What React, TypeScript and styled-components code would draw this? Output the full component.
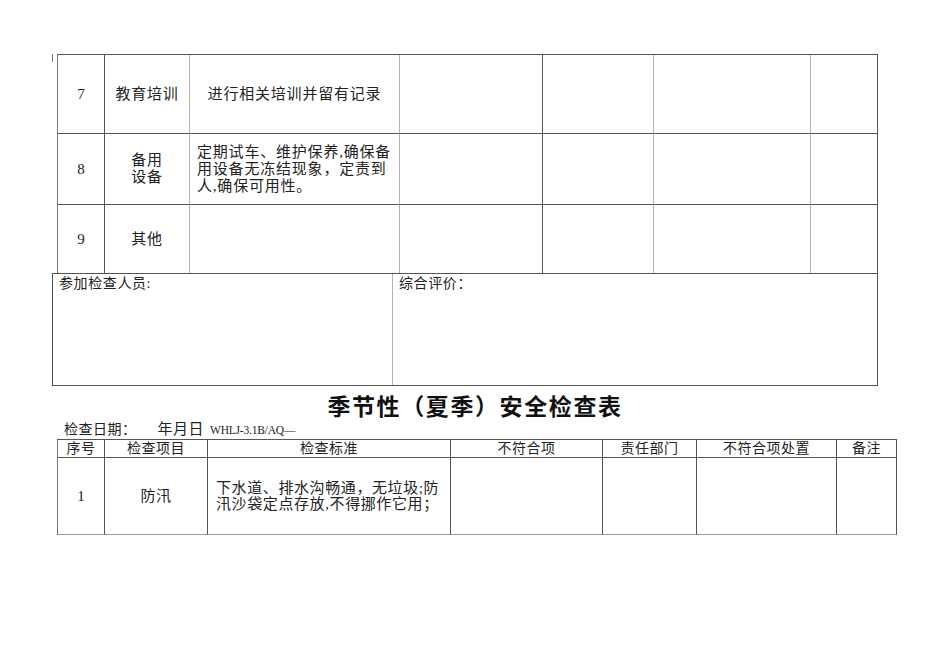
import React from "react";
import styled, { createGlobalStyle } from "styled-components";

const GlobalStyle = createGlobalStyle`
  html, body {
    margin: 0;
    padding: 0;
    background: #ffffff;
  }
  body {
    font-family: "Liberation Serif", "Noto Sans CJK SC", serif;
    color: #222222;
  }
`;

const DARK = "#555555";
const LIGHT = "#b4b4b4";

const Page = styled.div`
  width: 950px;
  height: 672px;
  padding-top: 54px;
  box-sizing: border-box;
  overflow: hidden;
`;

const TopRow = styled.div`
  display: flex;
  align-items: flex-start;
  padding-left: 52px;
`;

const Tick = styled.div`
  width: 1px;
  height: 8px;
  background: #777777;
  margin-right: 4px;
`;

const Grid = styled.div<{ $cols: string; $rows: string }>`
  display: grid;
  width: max-content;
  grid-template-columns: ${(p) => p.$cols};
  grid-template-rows: ${(p) => p.$rows};
  border-top: 1px solid ${DARK};
  border-left: 1px solid #777777;
  box-sizing: content-box;
`;

const Cell = styled.div<{
  $light?: boolean;
  $noBottom?: boolean;
  $align?: "center" | "left";
  $bottomLight?: boolean;
}>`
  box-sizing: border-box;
  border-right: 1px solid ${(p) => (p.$light ? LIGHT : DARK)};
  border-bottom: ${(p) =>
    p.$noBottom ? "none" : `1px solid ${p.$bottomLight ? "#9a9a9a" : DARK}`};
  display: flex;
  align-items: center;
  justify-content: ${(p) => (p.$align === "left" ? "flex-start" : "center")};
  text-align: ${(p) => (p.$align === "left" ? "left" : "center")};
  padding: ${(p) => (p.$align === "left" ? "0 0 0 7px" : "0")};
  font-size: 15px;
  line-height: 17px;
  letter-spacing: 0.8px;
  white-space: nowrap;
  overflow: hidden;
`;

const Num = styled.span`
  font-family: "Liberation Serif", serif;
  font-size: 15px;
  letter-spacing: 0;
`;

const InfoBox = styled.div`
  margin-left: 52px;
  width: 826px;
  height: 113px;
  box-sizing: border-box;
  border: 1px solid ${DARK};
  display: grid;
  grid-template-columns: 340px 1fr;
`;

const InfoCell = styled.div<{ $divider?: boolean }>`
  border-right: ${(p) => (p.$divider ? `1px solid ${LIGHT}` : "none")};
  padding: 1px 6px;
  font-size: 14px;
  line-height: 18px;
  letter-spacing: 0.6px;
`;

const Title = styled.h1`
  margin: 4px 0 0 0;
  height: 30px;
  line-height: 30px;
  text-align: center;
  font-family: "Noto Sans CJK SC", sans-serif;
  font-weight: 700;
  font-size: 23px;
  letter-spacing: 1.6px;
  color: #111111;
`;

const DateLine = styled.div`
  height: 19px;
  line-height: 19px;
  padding-left: 64px;
  font-size: 14px;
  letter-spacing: 0.5px;
  display: flex;
  align-items: baseline;
  white-space: nowrap;
`;

const DateValue = styled.span`
  margin-left: 21px;
  font-size: 15px;
`;

const Code = styled.span`
  margin-left: 6px;
  font-family: "Liberation Serif", serif;
  font-size: 11.5px;
  letter-spacing: -0.2px;
`;

const TableTwo = styled.div`
  margin-left: 57px;
`;

const HeadCell = styled(Cell)`
  font-size: 14px;
  line-height: 16px;
  letter-spacing: 0.5px;
`;

const BodyCell = styled(Cell)<{ $pad?: number }>`
  line-height: 16px;
  letter-spacing: 0.6px;
  padding-left: ${(p) => p.$pad ?? 0}px;
`;

const topCols = "47px 85px 210px 143px 111px 157px 67px";
const topLight = [false, true, true, false, true, true, false];

const topRows: { num: string; item: React.ReactNode; std: React.ReactNode; left?: boolean }[] = [
  { num: "7", item: "教育培训", std: "进行相关培训并留有记录" },
  {
    num: "8",
    item: (
      <>
        备用
        <br />
        设备
      </>
    ),
    std: (
      <>
        定期试车、维护保养,确保备
        <br />
        用设备无冻结现象，定责到
        <br />
        人,确保可用性。
      </>
    ),
    left: true,
  },
  { num: "9", item: "其他", std: "" },
];

const headers = ["序号", "检查项目", "检查标准", "不符合项", "责任部门", "不符合项处置", "备注"];
const twoCols = "47px 103px 243px 152px 94px 140px 60px";

export default function App() {
  return (
    <>
      <GlobalStyle />
      <Page>
        <TopRow>
          <Tick />
          <Grid $cols={topCols} $rows="79px 71px 68px">
            {topRows.map((r, i) => {
              const last = i === topRows.length - 1;
              return (
                <React.Fragment key={r.num}>
                  <Cell $light={topLight[0]} $noBottom={last}>
                    <Num>{r.num}</Num>
                  </Cell>
                  <Cell $light={topLight[1]} $noBottom={last}>
                    {r.item}
                  </Cell>
                  <Cell $light={topLight[2]} $noBottom={last} $align={r.left ? "left" : "center"}>
                    {r.std}
                  </Cell>
                  {[3, 4, 5, 6].map((c) => (
                    <Cell key={c} $light={topLight[c]} $noBottom={last} />
                  ))}
                </React.Fragment>
              );
            })}
          </Grid>
        </TopRow>
        <InfoBox>
          <InfoCell $divider>参加检查人员:</InfoCell>
          <InfoCell>综合评价：</InfoCell>
        </InfoBox>
        <Title>季节性（夏季）安全检查表</Title>
        <DateLine>
          检查日期：
          <DateValue>年月日</DateValue>
          <Code>WHLJ-3.1B/AQ—</Code>
        </DateLine>
        <TableTwo>
          <Grid $cols={twoCols} $rows="18px 77px">
            {headers.map((h) => (
              <HeadCell key={h}>{h}</HeadCell>
            ))}
            <BodyCell $bottomLight>
              <Num>1</Num>
            </BodyCell>
            <BodyCell $bottomLight>防汛</BodyCell>
            <BodyCell $bottomLight $align="left" $pad={8}>
              下水道、排水沟畅通，无垃圾;防
              <br />
              汛沙袋定点存放,不得挪作它用；
            </BodyCell>
            <BodyCell $bottomLight />
            <BodyCell $bottomLight />
            <BodyCell $bottomLight />
            <BodyCell $bottomLight />
          </Grid>
        </TableTwo>
      </Page>
    </>
  );
}
